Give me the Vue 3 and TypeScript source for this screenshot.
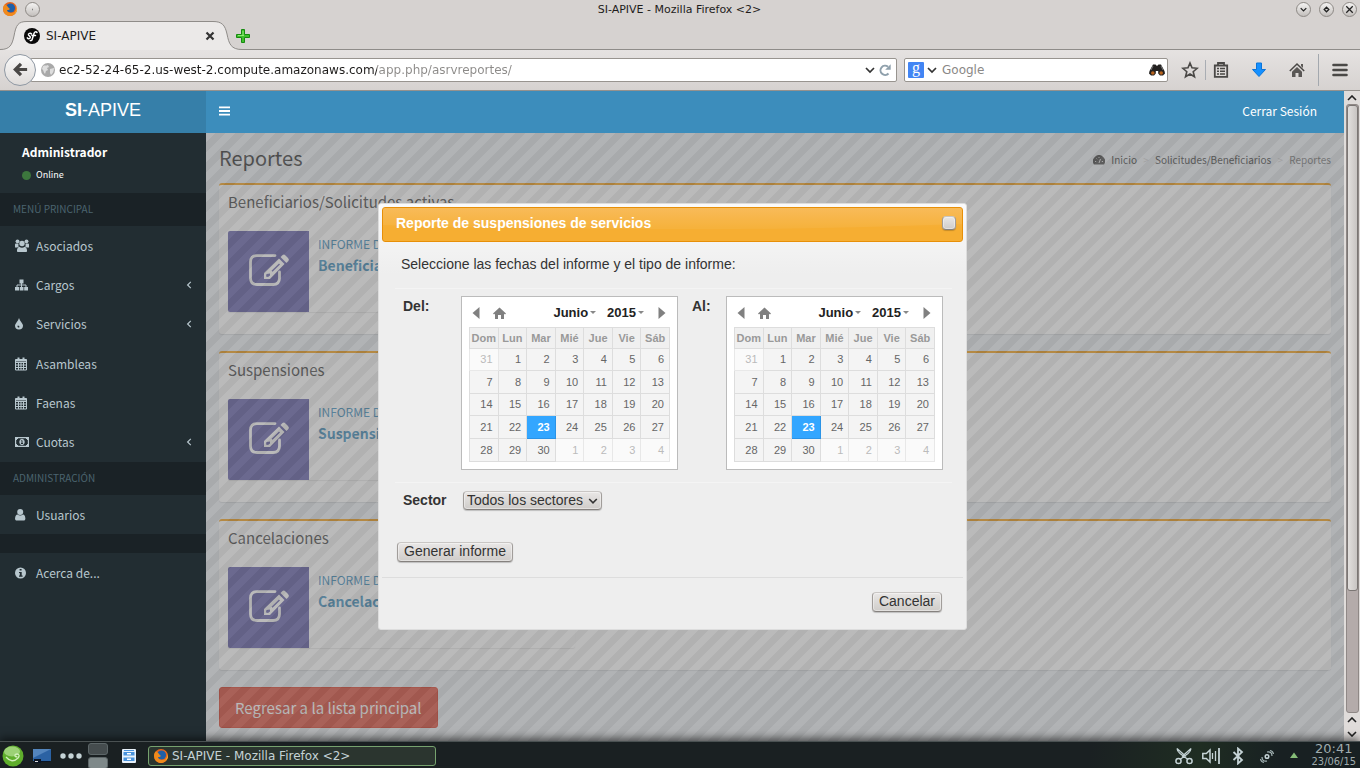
<script setup lang="ts">
import { ref } from 'vue'

interface MenuItem {
  label: string
  icon: string
  expandable?: boolean
}
interface Day {
  n: number
  out: boolean
}

const mainMenu: MenuItem[] = [
  { label: 'Asociados', icon: 'users' },
  { label: 'Cargos', icon: 'sitemap', expandable: true },
  { label: 'Servicios', icon: 'tint', expandable: true },
  { label: 'Asambleas', icon: 'calendar' },
  { label: 'Faenas', icon: 'calendar' },
  { label: 'Cuotas', icon: 'money', expandable: true }
]

const boxes = [
  { title: 'Beneficiarios/Solicitudes activas', kind: 'Informe de', name: 'Beneficiarios' },
  { title: 'Suspensiones', kind: 'Informe de', name: 'Suspensiones' },
  { title: 'Cancelaciones', kind: 'Informe de', name: 'Cancelaciones' }
]

const weekdays = ['Dom', 'Lun', 'Mar', 'Mié', 'Jue', 'Vie', 'Sáb']
const weeks: Day[][] = Array.from({ length: 5 }, (_, w) =>
  Array.from({ length: 7 }, (_, d) => {
    const n = w * 7 + d
    if (n === 0) return { n: 31, out: true }
    return n > 30 ? { n: n - 30, out: true } : { n, out: false }
  })
)

const calendars = [
  { id: 'from', label: 'Del:' },
  { id: 'to', label: 'Al:' }
]
const selected = ref<Record<string, number>>({ from: 23, to: 23 })
const url = ref('ec2-52-24-65-2.us-west-2.compute.amazonaws.com/app.php/asrvreportes/')
const search = ref('')
const sector = ref('todos')

function pick(id: string, day: Day) {
  if (!day.out) selected.value[id] = day.n
}
</script>

<template>
  <div class="desktop">
    <header class="titlebar">
      <div class="tb-side">
        <svg class="i16" viewBox="0 0 16 16" aria-hidden="true">
          <circle cx="8" cy="8" r="7" fill="#e8641b" />
          <circle cx="8.500" cy="7" r="4.600" fill="#1f5fa8" />
          <path d="M1 7c0 6 4 8 7 8s7-2 7-8c-1 3-3 5-6 5-2 0-4-1-4-3 1 0 2 0 3-1-2-1-2-3-4-4-1-1-2-1-3 3z" fill="#f08a1c" />
          <path d="M12 3c3 2 3 6 1 9 2-1 3-6-1-9z" fill="#fbd03a" />
        </svg>
        <button class="round" type="button" aria-label="Menú de ventana"><svg viewBox="0 0 14 14"><path d="M6.500 7h1" stroke="#777" /></svg></button>
      </div>
      <span class="wtitle">SI-APIVE - Mozilla Firefox &lt;2&gt;</span>
      <div class="tb-side right">
        <button class="round" type="button" aria-label="Minimizar"><svg viewBox="0 0 14 14"><path d="M4 5.500 7 8.500l3-3" /></svg></button>
        <button class="round" type="button" aria-label="Maximizar"><svg viewBox="0 0 14 14"><path d="M7 4.500 9.500 7 7 9.500 4.500 7z" /></svg></button>
        <button class="round" type="button" aria-label="Cerrar"><svg viewBox="0 0 14 14"><path d="m3.500 3.500 7 7m0-7-7 7" /></svg></button>
      </div>
    </header>

    <div class="tabs">
      <svg class="tabshape" viewBox="0 0 242 30" aria-hidden="true">
        <path d="M0 29.500C10 29.500 12 25 14 16 16 5 18 1.500 27 1.500H213C222 1.500 225 5 227 14 229 24 231 29.500 242 29.500V31H0z" fill="#ebe9e8" />
        <path d="M0 29.500C10 29.500 12 25 14 16 16 5 18 1.500 27 1.500H213C222 1.500 225 5 227 14 229 24 231 29.500 242 29.500" fill="none" stroke="#8f8c89" />
      </svg>
      <div class="tab">
        <svg class="i16" viewBox="0 0 16 16" aria-hidden="true">
          <circle cx="8" cy="8" r="8" fill="#0a0a0a" />
          <path d="M7.500 6C6.500 4.500 4 5.500 4.500 7c.4 1 2 1 1.800 2.500-.2 1.500-2.300 1.600-3 .4M13 4.500c-1-1.500-2.600-.6-3.200 1.500L8.300 11c-.4 1.500-1.300 2-2 1.500M8 7.500h3.500" fill="none" stroke="#fff" stroke-width="1.500" stroke-linecap="round" />
        </svg>
        <span>SI-APIVE</span>
        <button class="bare tabx" type="button" aria-label="Cerrar pestaña"><svg viewBox="0 0 10 10"><path d="m1.500 1.500 7 7m0-7-7 7" fill="none" stroke="#333" stroke-width="2.200" /></svg></button>
      </div>
      <button class="bare newtab" type="button" aria-label="Nueva pestaña"><svg viewBox="0 0 14 14"><path d="M5.500.5h3v5h5v3h-5v5h-3v-5h-5v-3h5z" fill="#3fc02c" stroke="#178a10" /><path d="M7 2v5M2 6.500h6" stroke="#8cec72" fill="none" /></svg></button>
    </div>

    <div class="toolbar">
      <button class="back" type="button" aria-label="Atrás"><svg viewBox="0 0 18 18"><path d="M16 9H4M9.500 3 3.500 9l6 6" fill="none" stroke="#4a4846" stroke-width="3.400" /></svg></button>
      <div class="urlbox">
        <svg class="globe" viewBox="0 0 14 14" aria-hidden="true"><circle cx="7" cy="7" r="7" fill="#a9a9a9" /><path d="M2 3c2-1 3 0 5-1l1 2-2 1 1 2-2 1-1 3C2 9 3 7 1 6zM9 6l4-1c0 3-1 5-3 7l-1-2z" fill="#dedede" /></svg>
        <input v-model="url" class="url" type="text" aria-label="Dirección" spellcheck="false" />
        <button class="bare dd" type="button" aria-label="Historial"><svg viewBox="0 0 10 10"><path d="m1 3 4 4 4-4" fill="none" stroke="#333" stroke-width="1.700" /></svg></button>
        <button class="bare rl" type="button" aria-label="Recargar"><svg viewBox="0 0 12 12"><path d="M9.500 9.500A4.600 4.600 0 1 1 9 2.800" fill="none" stroke="#8fa0ac" stroke-width="2" /><path d="M11.700.3v5.500H6.200z" fill="#8fa0ac" /></svg></button>
      </div>
      <div class="searchbox">
        <span class="gmark" aria-hidden="true">g</span>
        <button class="bare dd" type="button" aria-label="Buscador"><svg viewBox="0 0 10 10"><path d="m1 3 4 4 4-4" fill="none" stroke="#333" stroke-width="1.700" /></svg></button>
        <input v-model="search" type="search" placeholder="Google" aria-label="Buscar" />
        <button class="bare bino" type="button" aria-label="Buscar ahora"><svg viewBox="0 0 16 12"><path d="M4 .5h2.500L8 2 9.500.5H12l3.500 6.500 .5 2.500-2 2h-3L9.200 9.500V7H6.800v2.500L5 11.500H2l-2-2L.5 7z" fill="#22201f" /><path d="M4 2 2 6M12 2l2 4" stroke="#777" fill="none" /><circle cx="3.800" cy="9" r="1.800" fill="#b8621c" /><circle cx="12.200" cy="9" r="1.800" fill="#b8621c" /></svg></button>
      </div>
      <div class="tools">
        <button class="bare" type="button" aria-label="Marcar"><svg viewBox="0 0 18 18"><path d="m9 2 2 4.800 5.200.5-4 3.400 1.300 5.100L9 13l-4.500 2.800 1.300-5.100-4-3.400L7 6.800z" fill="none" stroke="#4a4846" stroke-width="1.600" /></svg></button>
        <button class="bare sep" type="button" aria-label="Marcadores"><svg viewBox="0 0 18 18"><path d="M2.800 4.500h12.400v11.300H2.800zM6 4V2h6v2" fill="none" stroke="#4a4846" stroke-width="1.800" /><path d="M5 7.500h2m1 0h5M5 10.300h2m1 0h5M5 13h2m1 0h5" stroke="#4a4846" stroke-width="1.500" /></svg></button>
        <button class="bare" type="button" aria-label="Descargas"><svg viewBox="0 0 18 18"><path d="M6.500 2h5v6.500h4L9 15.500 2.500 8.500h4z" fill="#1590ff" stroke="#0b74d8" /></svg></button>
        <button class="bare" type="button" aria-label="Inicio"><svg viewBox="0 0 18 18"><path d="m1.800 10 7.200-7 7.200 7" fill="none" stroke="#4a4846" stroke-width="1.500" /><path d="M13 3h2v4l-2-2zM9 6l5 4.800V16h-3.500v-4h-3v4H4v-5.200z" fill="#5a5755" /></svg></button>
        <button class="bare last" type="button" aria-label="Menú"><svg viewBox="0 0 18 18"><path d="M2.500 4h13M2.500 9h13M2.500 14h13" stroke="#4a4846" stroke-width="2.600" stroke-linecap="round" /></svg></button>
      </div>
    </div>

    <div class="viewport">
      <div class="app">
        <header class="navbar">
          <a class="brand" href="#"><b>SI</b>-APIVE</a>
          <nav class="topnav">
            <button class="bare burger" type="button" aria-label="Alternar menú"><svg viewBox="0 0 12 10"><path d="M0 1h12M0 5h12M0 9h12" stroke="#fff" stroke-width="2" /></svg></button>
            <a class="logout" href="#">Cerrar Sesión</a>
          </nav>
        </header>

        <div class="columns">
          <aside class="sidebar">
            <div class="user">
              <strong>Administrador</strong>
              <a href="#"><i class="dot"></i>Online</a>
            </div>
            <h2 class="group">MENÚ PRINCIPAL</h2>
            <ul class="menu">
              <li v-for="m in mainMenu" :key="m.label">
                <a href="#">
                  <svg class="mi" viewBox="0 0 14 14" aria-hidden="true">
                    <g v-if="m.icon === 'users'" fill="#b8c7ce"><circle cx="2.500" cy="2.300" r="1.900" /><circle cx="11.500" cy="2.300" r="1.900" /><circle cx="7" cy="4.500" r="2.700" /><path d="M0 8V5.500Q0 4.500 1 4.500h2.500Q3 7 4.200 7.600 3 7.700 2.300 8.500H0zM14 8V5.500Q14 4.500 13 4.500h-2.500Q11 7 9.800 7.600q1.200.1 1.900.9H14zM2.500 13q-.8-.5-.5-2 .3-3 2.200-3.200Q7 9.500 9.800 7.800 11.700 8 12 11q.3 1.500-.5 2z" /></g>
                    <g v-else-if="m.icon === 'sitemap'" fill="#b8c7ce"><path d="M4.500 1.500h4v4h-4zM0 9h4v3.500H0zM4.700 9h3.800v3.500H4.700zM9.200 9h3.800v3.500H9.200z" /><path d="M6.500 5v4M2 9.500V7h9v2.500" fill="none" stroke="#b8c7ce" /></g>
                    <path v-else-if="m.icon === 'tint'" fill="#b8c7ce" fill-rule="evenodd" d="M4 1q.5 2 2.500 4.500Q8 7.500 8 8.500a4 4 0 0 1-8 0q0-1 1.500-3Q3.500 3 4 1zM2.800 8.500Q2 9.500 3 10.500h1.300V9z" />
                    <g v-else-if="m.icon === 'calendar'" fill="none" stroke="#b8c7ce"><path d="M.5 2.500h11v10.500H.5zM.5 5.500h11M.5 8h11M.5 10.500h11M3.500 5v8M6 5v8M8.500 5v8" /><path d="M.5 3.500h11" stroke-width="2" /><path d="M3.500.5V3M8.500.5V3" stroke-width="2" /></g>
                    <g v-else fill="none" stroke="#b8c7ce"><path d="M.6 2.600h12.800v8.800H.6z" stroke-width="1.200" /><path d="M1 3h2L1 5zM13 3h-2l2 2zM1 11h2L1 9zM13 11h-2l2-2z" fill="#b8c7ce" /><ellipse cx="7" cy="7" rx="2.200" ry="2.800" fill="#b8c7ce" /><path d="M6.500 5.500H7v3M6 8.500h2" stroke="#222d32" /></g>
                  </svg>
                  <span>{{ m.label }}</span>
                  <svg v-if="m.expandable" class="chev" viewBox="0 0 6 8" aria-hidden="true"><path d="M4.800.8 1.600 4l3.200 3.200" fill="none" stroke="#b8c7ce" stroke-width="1.200" /></svg>
                </a>
              </li>
            </ul>
            <h2 class="group">ADMINISTRACIÓN</h2>
            <ul class="menu single">
              <li><a href="#"><svg class="mi" viewBox="0 0 14 14" aria-hidden="true"><circle cx="5.200" cy="4" r="3" fill="#b8c7ce" /><path d="M1 12.500Q-.2 12 .1 10 .5 6.500 2.500 6.500 5.200 8.500 8 6.500q2 0 2.300 3.500.3 2-.9 2.500z" fill="#b8c7ce" /></svg><span>Usuarios</span></a></li>
            </ul>
            <div class="spacer"></div>
            <ul class="menu single">
              <li><a href="#"><svg class="mi" viewBox="0 0 14 14" aria-hidden="true"><circle cx="5.500" cy="7" r="5.500" fill="#b8c7ce" /><path d="M4.600 3h2v1.600h-2zM4 6h2.700v3.500h.9v1.200H4V9.500h.8V7H4z" fill="#222d32" /></svg><span>Acerca de...</span></a></li>
            </ul>
          </aside>

          <main class="content">
            <div class="head">
              <h1>Reportes</h1>
              <nav class="crumbs" aria-label="Ruta">
                <a href="#"><svg viewBox="0 0 12 10" aria-hidden="true"><path d="M1 9.500A6 6 0 1 1 11 9.500z" fill="#444" /><path d="m6 8 1.500-4" stroke="#ddd" /><path d="M2 6.500h1.200M8.800 6.500H10M3.500 3.500l.7.700M6 2v1" stroke="#ddd" /></svg>Inicio</a>
                <i>&gt;</i><a href="#">Solicitudes/Beneficiarios</a><i>&gt;</i><span>Reportes</span>
              </nav>
            </div>
            <section v-for="b in boxes" :key="b.title" class="box">
              <h3>{{ b.title }}</h3>
              <a class="info" href="#">
                <span class="tile">
                  <svg viewBox="0 0 42 34" aria-hidden="true">
                    <path d="M27 2.600H9Q2.500 2.600 2.500 9v16q0 6.500 6.500 6.500h16q6.500 0 6.500-6.500v-6" fill="none" stroke="#fff" stroke-width="2.800" stroke-linecap="round" />
                    <path fill-rule="evenodd" d="M16 20 31 5.500l5.500 5.500L22 26h-6zM18.500 21l-.5 2.500 2 .5 2-1.500v-2zM23.500 17.800l7.500-7.300 1 1-7.500 7.300z" fill="#fff" />
                    <path d="m32.500 4 2-2q1.500-1 3 .5l2.500 2.500q1.500 1.500.5 3l-2 2z" fill="#fff" />
                  </svg>
                </span>
                <span class="infotext"><span class="kind">{{ b.kind }}</span><b>{{ b.name }}</b></span>
              </a>
            </section>
            <button class="danger" type="button">Regresar a la lista principal</button>
            <div class="overlay"></div>
          </main>
        </div>
      </div>

      <div class="modal-layer">
        <div class="dialog" role="dialog" aria-labelledby="dlg-title">
          <div class="dlg-title">
            <svg class="gloss" viewBox="0 0 580 33" preserveAspectRatio="none" aria-hidden="true"><path d="M0 0h580v16Q420 22 290 21 120 21 0 17z" fill="#fff" opacity=".05" /></svg>
            <h2 id="dlg-title">Reporte de suspensiones de servicios</h2>
            <button class="kbtn dlg-close" type="button" aria-label="Cerrar"></button>
          </div>
          <form class="dlg-body" @submit.prevent>
            <p>Seleccione las fechas del informe y el tipo de informe:</p>
            <div class="row dates">
              <template v-for="c in calendars" :key="c.id">
                <strong :id="'lbl-' + c.id" class="lbl">{{ c.label }}</strong>
                <div class="cal" role="group" :aria-labelledby="'lbl-' + c.id">
                  <div class="calnav">
                    <button class="bare arr" type="button" aria-label="Mes anterior"><svg viewBox="0 0 8 12"><path d="M7.500 0v12L.5 6z" fill="#808080" /></svg></button>
                    <button class="bare home" type="button" aria-label="Hoy"><svg viewBox="0 0 13 12"><path d="M6.500.5 13 6.500l-1 1-1-.8V12H8V8H5v4H2V6.700l-1 .8-1-1z" fill="#808080" /></svg></button>
                    <button class="bare pick" type="button">Junio<i></i></button>
                    <button class="bare pick" type="button">2015<i></i></button>
                    <button class="bare arr next" type="button" aria-label="Mes siguiente"><svg viewBox="0 0 8 12"><path d="M.5 0v12l7-6z" fill="#808080" /></svg></button>
                  </div>
                  <table>
                    <thead><tr><th v-for="w in weekdays" :key="w" scope="col">{{ w }}</th></tr></thead>
                    <tbody>
                      <tr v-for="(week, i) in weeks" :key="i">
                        <td v-for="d in week" :key="d.n" :class="{ out: d.out, on: !d.out && selected[c.id] === d.n }">
                          <button type="button" class="bare" @click="pick(c.id, d)">{{ d.n }}</button>
                        </td>
                      </tr>
                    </tbody>
                  </table>
                </div>
              </template>
            </div>
            <div class="row sector">
              <label class="lbl" for="sector">Sector</label>
              <div class="selwrap">
                <select id="sector" v-model="sector" class="kbtn">
                  <option value="todos">Todos los sectores</option>
                </select>
                <svg viewBox="0 0 10 6" aria-hidden="true"><path d="m1.200 1 3.800 3.800L8.800 1" fill="none" stroke="#333" stroke-width="1.600" /></svg>
              </div>
            </div>
            <button class="kbtn generate" type="submit">Generar informe</button>
          </form>
          <div class="dlg-foot"><button class="kbtn" type="button">Cancelar</button></div>
        </div>
      </div>

      <div class="scroll" aria-hidden="true">
        <svg viewBox="0 0 10 6"><path d="m1 5 4-4 4 4" /></svg>
        <div class="track"><div class="thumb"></div></div>
        <svg viewBox="0 0 10 6"><path d="m1 5 4-4 4 4" /></svg>
        <svg viewBox="0 0 10 6"><path d="m1 1 4 4 4-4" /></svg>
      </div>
    </div>

    <footer class="taskbar">
      <button class="bare start" type="button" aria-label="Lanzador"><svg viewBox="0 0 22 22"><circle cx="11" cy="11" r="10.500" fill="#5fae2c" /><ellipse cx="10" cy="6.500" rx="8" ry="5" fill="#c5e8a8" opacity=".6" /><path d="M4 12q6 7 12 1 2.500-3-.5-4-3 0-2.500 2.200 1 1.300 2.200 0" fill="none" stroke="#d3efbe" stroke-width="1.300" /></svg></button>
      <button class="bare desk" type="button" aria-label="Escritorio"><svg viewBox="0 0 18 14"><path d="M0 0h18v12H0z" fill="#2b62a3" /><path d="M0 0h18L0 9z" fill="#5385bd" /><path d="M1 10h7v4H1zM8 12h9v1H8z" fill="#0b1524" /><path d="M2 12h3v1H2z" fill="#ddd" /></svg></button>
      <button class="bare dots" type="button" aria-label="Actividades"><svg viewBox="0 0 22 6"><circle cx="3" cy="3" r="2.700" /><circle cx="11" cy="3" r="2.700" /><circle cx="19" cy="3" r="2.700" /></svg></button>
      <div class="pager"><button type="button" aria-label="Escritorio 1"></button><button type="button" class="cur" aria-label="Escritorio 2"></button></div>
      <button class="bare files" type="button" aria-label="Archivos"><svg viewBox="0 0 14 14"><rect width="14" height="14" rx="1" fill="#e9f2fb" /><path d="M2 1h10v1H2zM1.500 3h11v3.500h-11zM1.500 8.500h11V12h-11z" fill="#4a93dc" /><path d="M5 4h4v1.500H5zM5 9.500h4V11H5z" fill="#fff" /></svg></button>
      <button class="task" type="button">
        <svg viewBox="0 0 16 16" aria-hidden="true"><circle cx="8" cy="8" r="7" fill="#e8641b" /><circle cx="8.500" cy="7" r="4.600" fill="#1f5fa8" /><path d="M1 7c0 6 4 8 7 8s7-2 7-8c-1 3-3 5-6 5-2 0-4-1-4-3 1 0 2 0 3-1-2-1-2-3-4-4-1-1-2-1-3 3z" fill="#f08a1c" /><path d="M12 3c3 2 3 6 1 9 2-1 3-6-1-9z" fill="#fbd03a" /></svg>
        SI-APIVE - Mozilla Firefox &lt;2&gt;
      </button>
      <div class="tray">
        <svg viewBox="0 0 18 18"><path d="M2 1.500q0 2.500 3 5l8 6M16 1.500q0 2.500-3 5l-8 6M2 1.500l9 8M16 1.500l-9 8" stroke-width="1.200" /><circle cx="3.500" cy="14" r="2.600" /><circle cx="14.500" cy="14" r="2.600" /></svg>
        <svg viewBox="0 0 18 18"><path d="M.8 6.500h3.500L8 3v12l-3.700-3.500H.8z" /><path d="M10.500 6v6M13.500 4v10" stroke-width="1.300" /><path d="M17 1v16" stroke-width="1.800" /></svg>
        <svg viewBox="0 0 18 18"><path d="m4.500 5 8.500 8-4 3.500v-15L13 5l-8.500 8" stroke-width="1.800" /></svg>
        <svg viewBox="0 0 18 18"><circle cx="9" cy="9.500" r="1.800" /><path d="M9 5q5-1 5 4M9 14q-5 1-5-4M12 3.500q3 .5 3.500 3.500M6 15.500Q3 15 2.500 12" stroke="#a3b3b5" stroke-width="1.200" /></svg>
        <svg viewBox="0 0 18 18"><path d="m9 5.500 4 5.500H5z" fill="#86bd78" stroke="none" /></svg>
      </div>
      <div class="clock"><time class="hour">20:41</time><span>23/06/15</span></div>
    </footer>
  </div>
</template>

<style>
body { margin: 0; }
</style>

<style scoped>
* { box-sizing: border-box; }
h1, h2, h3, p, ul { margin: 0; padding: 0; font-weight: 400; }
ul { list-style: none; }
a { color: inherit; text-decoration: none; }
svg { display: block; flex: none; }
button, input, select { font: inherit; color: inherit; }
.bare { background: none; border: 0; padding: 0; display: flex; align-items: center; justify-content: center; }

.desktop {
  min-height: 100vh; display: flex; flex-direction: column; background: #d6d2d0;
  font-family: "DejaVu Sans", sans-serif; font-size: 12px; color: #1e1c1b; overflow: hidden;
}
.titlebar { height: 20px; display: flex; align-items: center; justify-content: space-between; padding: 0 3px 2px 2px; font-size: 11px; }
.tb-side { width: 90px; display: flex; align-items: center; gap: 7px; }
.tb-side.right { justify-content: flex-end; gap: 8px; }
.i16 { width: 16px; height: 16px; }
.round { width: 15px; height: 15px; border-radius: 50%; border: 1px solid #8d8985; padding: 0; background: linear-gradient(#f4f3f2, #c3bfbc); }
.round svg { width: 13px; height: 13px; fill: none; stroke: #222; stroke-width: 1.4; }

.tabs { height: 30px; position: relative; display: flex; align-items: center; border-bottom: 1px solid #8f8c89; padding-top: 2px; }
.tabshape { position: absolute; left: 0; top: 0; width: 242px; height: 30px; }
.tab { position: relative; width: 215px; padding-left: 24px; display: flex; align-items: center; gap: 6px; }
.tabx { margin-left: auto; }
.tabx svg { width: 10px; height: 10px; }
.newtab { margin-left: 21px; position: relative; }
.newtab svg { width: 14px; height: 14px; }

.toolbar { height: 41px; display: flex; align-items: center; padding: 0 11px 1px 4px; background: linear-gradient(#e5e2e1, #d6d2d0); border-bottom: 1px solid #95918d; }
.back { width: 32px; height: 32px; border-radius: 50%; border: 1px solid #8f98a3; background: linear-gradient(#fafafa, #dedbd9); padding: 0; display: grid; place-items: center; position: relative; z-index: 1; }
.back svg { width: 17px; height: 17px; }
.urlbox, .searchbox { height: 24px; background: #fff; border: 1px solid #98948f; border-radius: 2px; display: flex; align-items: center; }
.urlbox { flex: 1; margin-left: -6px; padding: 0 5px 0 10px; gap: 4px; }
.globe { width: 14px; height: 14px; }
.urlbox input, .searchbox input { flex: 1; min-width: 0; border: 0; outline: 0; padding: 0; height: 20px; background: none; appearance: none; }
.urlbox .url { color: transparent; background: linear-gradient(90deg, #1e1c1b 318px, #8c8a88 318px); background-clip: text; -webkit-background-clip: text; }
.dd svg { width: 10px; height: 10px; }
.rl svg { width: 12px; height: 12px; }
.searchbox { width: 264px; margin-left: 7px; padding: 0 2px 0 3px; gap: 3px; }
.searchbox input { padding-left: 2px; }
.searchbox input::placeholder { color: #8a8886; opacity: 1; }
.gmark { width: 16px; height: 16px; background: #4285f4; border-radius: 1px; color: #fff; font: 16px/12px "Liberation Serif", serif; text-align: center; }
.bino svg { width: 16px; height: 12px; }
.tools { display: flex; align-items: center; margin-left: 13px; }
.tools svg { width: 18px; height: 18px; }
.tools .bare { margin-right: 20px; height: 20px; }
.tools .bare:first-child { margin-right: 6px; }
.tools .sep { border-left: 1px solid #a9adb3; padding-left: 6px; }
.tools .last { margin: 0; height: 32px; border-left: 1px solid #a3a8ae; padding-left: 12px; margin-left: -8px; }

.viewport { flex: 1; display: flex; position: relative; }
.app { flex: 1; min-width: 0; display: flex; flex-direction: column; font-family: "Noto Sans CJK SC", sans-serif; font-size: 12px; line-height: 20px; }
.navbar { height: 42px; display: flex; background: #3c8dbc; color: #fff; }
.brand { width: 206px; background: #367fa9; text-align: center; font: 18px/38px "Liberation Sans", sans-serif; }
.topnav { flex: 1; display: flex; align-items: center; justify-content: space-between; padding: 0 27px 3px 13px; }
.burger svg { width: 11px; height: 10px; }
.columns { flex: 1; display: flex; }
.sidebar { width: 206px; background: #222d32; color: #b8c7ce; }
.user { height: 60px; padding: 9px 22px; color: #fff; display: flex; flex-direction: column; gap: 4px; }
.user strong { font-size: 12px; line-height: 20px; }
.user a { font-size: 9px; line-height: 18px; display: flex; align-items: center; gap: 5px; }
.dot { width: 9px; height: 9px; border-radius: 50%; background: #3c763d; }
.group { height: 33px; background: #1a2226; color: #4b646f; font-size: 10px; line-height: 32px; padding-left: 13px; }
.menu { height: 236px; display: grid; grid-auto-rows: 1fr; }
.menu.single { height: 39px; }
.menu a { height: 100%; display: flex; align-items: center; padding: 0 14px 0 15px; gap: 7px; }
.mi { width: 14px; height: 14px; }
.chev { width: 6px; height: 8px; margin-left: auto; }
.spacer { height: 19px; background: #1a2226; }

.content { flex: 1; position: relative; background: #ecf0f5; padding: 0 13px 12px; }
.head { height: 50px; display: flex; align-items: center; justify-content: space-between; }
.head h1 { font-size: 20px; line-height: 24px; color: #333; }
.crumbs { display: flex; font-size: 10px; line-height: 16px; color: #777; padding-top: 4px; }
.crumbs a { display: flex; align-items: center; color: #444; }
.crumbs svg { width: 12px; height: 10px; margin-right: 6px; }
.crumbs i { font-style: normal; color: #ccc; width: 18px; text-align: center; }
.box { height: 151px; margin-bottom: 17px; background: #fff; border-top: 2px solid #f39c12; border-radius: 3px; box-shadow: 0 1px 1px rgba(0, 0, 0, .1); padding: 7px 9px; }
.box h3 { font-size: 15px; line-height: 20px; color: #444; }
.info { margin-top: 19px; width: 347px; height: 81px; display: flex; background: #fff; border-radius: 2px; box-shadow: 0 1px 1px rgba(0, 0, 0, .1); color: #3c8dbc; overflow: hidden; }
.tile { width: 81px; background: #605ca8; padding: 22px 0 0 20px; }
.tile svg { width: 42px; height: 34px; }
.infotext { padding: 3px 9px; display: flex; flex-direction: column; }
.kind { text-transform: uppercase; font-size: 12px; line-height: 20px; }
.infotext b { font-size: 14px; line-height: 22px; }
.danger { display: block; height: 41px; padding: 0 15px; border: 1px solid #d73925; border-radius: 3px; background: #dd4b39; color: #fff; font-size: 15px; line-height: 20px; }
.overlay {
  position: absolute; inset: 0; opacity: .5; background-color: #666; background-size: 20px 20px;
  background-image: linear-gradient(135deg, #777 25%, #666 25%, #666 50%, #777 50%, #777 75%, #666 75%);
}

.modal-layer { position: absolute; inset: 0 15px 0 0; display: flex; align-items: center; justify-content: center; font: 14px/20px "Liberation Sans", sans-serif; color: #333; }
.dialog { width: 589px; max-width: 100%; border: 1px solid #ddd; border-radius: 3px; padding: 3px 3px 0; background: #eee linear-gradient(#fafafa, #eee) no-repeat 0 0 / 100% 70px; }
.dlg-title { position: relative; height: 35px; border: 1px solid #e78f08; border-radius: 3px; background: linear-gradient(#f8b850, #f6ae32 60%); display: flex; align-items: center; justify-content: space-between; padding: 0 6px 2px 13px; }
.gloss { position: absolute; left: 0; top: 0; width: 100%; height: 100%; }
.dlg-title h2 { position: relative; font-size: 14px; line-height: 20px; font-weight: 700; color: #fff; }
.kbtn {
  border: 1px solid #a19d9a; border-top-color: #c9c6c4; border-bottom-color: #85817e; border-radius: 4px; padding: 0 6px; height: 20px; line-height: 17px;
  background: linear-gradient(#e9e7e6, #cfccc9); box-shadow: inset 0 0 0 1px rgba(255, 255, 255, .4), 0 1px 1px rgba(0, 0, 0, .2); color: #333;
}
.dlg-close { position: relative; width: 14px; height: 14px; padding: 0; }
.dlg-body { padding: 0 11px 15px 13px; }
.dlg-body p { padding: 12px 6px 14px; }
.row { border-top: 1px solid #f4f4f4; display: grid; padding: 7px 9px 12px 0; }
.dates { grid-template-columns: 66px 1fr 48px 1fr; }
.lbl { padding-left: 8px; font-weight: 700; }
.cal ~ .lbl { padding-left: 14px; }
.cal { height: 174px; background: #fff; border: 1px solid #bbb; padding: 0 7px; font-size: 11px; line-height: 20px; }
.calnav { height: 30px; display: flex; align-items: center; padding: 2px 4px 0 3px; }
.arr svg { width: 8px; height: 12px; }
.home { margin: 0 auto 0 13px; }
.home svg { width: 13px; height: 12px; }
.pick { font-weight: 700; font-size: 13px; color: #222; margin-right: 11px; gap: 2px; }
.pick i { border: 3px solid transparent; border-top-color: #888; border-bottom: 0; }
.next { margin-left: 3px; }
.cal table { width: 100%; height: 135px; border-collapse: collapse; table-layout: fixed; }
.cal th, .cal td { border: 1px solid #ddd; padding: 0; background: #f4f4f4; }
.cal th { color: #999; font-weight: 700; background: #f0f0f0; }
.cal td { color: #666; }
.cal td .bare { width: 100%; justify-content: flex-end; padding-right: 5px; height: 20px; }
.cal td.out { color: #bbb; background: #fafafa; border-color: #e8e8e8; }
.cal td.on { background: #33a6ff; color: #fff; font-weight: 700; border-color: #2b93e6; }
.sector { grid-template-columns: 68px 1fr; padding: 8px 9px 31px 0; align-items: center; }
.sector .lbl { padding-bottom: 2px; line-height: 18px; }
.selwrap { position: relative; justify-self: start; display: flex; }
.selwrap select { appearance: none; padding: 0 18px 0 3px; height: 19px; }
.selwrap svg { position: absolute; right: 4px; top: 7px; width: 10px; height: 6px; pointer-events: none; }
.generate { display: block; margin-left: 2px; }
.dlg-foot { border-top: 1px solid #ddd; padding: 14px 21px 17px; display: flex; justify-content: flex-end; }

.scroll { width: 16px; background: #e0dcda; display: flex; flex-direction: column; align-items: center; gap: 8px; padding: 4px 0; }
.scroll svg { width: 10px; height: 6px; fill: none; stroke: #222; stroke-width: 1.6; }
.track { flex: 1; width: 13px; background: #b4abaa; border: 1px solid #8f8886; border-radius: 3px; margin-top: -5px; margin-bottom: -4px; }
.thumb { height: 80%; background: linear-gradient(90deg, #e2dfdd, #c8c4c2); border: 1px solid #7b7674; border-radius: 3px; }

.taskbar {
  height: 27px; display: flex; align-items: center; padding: 1px 4px 0 2px; border-top: 1px solid #4a5152; position: relative;
  background: linear-gradient(100deg, #1a2022 0 80%, #1f2d22 88%, #182022 94%); box-shadow: 0 -3px 8px rgba(0, 0, 0, .55); color: #c5d3d6;
}
.start svg { width: 22px; height: 22px; }
.desk { margin-left: 9px; }
.desk svg { width: 18px; height: 14px; }
.dots { margin-left: 9px; }
.dots svg { width: 22px; height: 6px; fill: #c5d3d6; }
.pager { margin-left: 6px; display: flex; flex-direction: column; gap: 2px; }
.pager button { width: 20px; height: 12px; border: 1px solid #5d6668; border-radius: 3px; background: #454c4e; padding: 0; }
.pager .cur { background: #7f898a; }
.files { margin-left: 14px; }
.files svg { width: 14px; height: 14px; }
.task { margin-left: 12px; width: 288px; height: 20px; border: 1px solid #76a26e; border-radius: 3px; background: #2b352f; display: flex; align-items: center; gap: 3px; padding: 0 4px; color: #c5d3d6; white-space: nowrap; }
.task svg { width: 16px; height: 16px; }
.tray { margin-left: auto; display: flex; gap: 9px; margin-right: 11px; }
.tray svg { width: 18px; height: 18px; fill: none; stroke: #c5d3d6; stroke-width: 1.5; }
.tray svg:nth-child(n + 4) { margin-right: -2px; margin-left: 2px; }
.clock { display: flex; flex-direction: column; align-items: center; font-size: 11px; line-height: 13px; color: #9fabad; font-family: "DejaVu Sans Condensed", "DejaVu Sans", sans-serif; }
.hour { font-size: 13px; line-height: 12px; font-family: "DejaVu Sans", sans-serif; }
</style>
